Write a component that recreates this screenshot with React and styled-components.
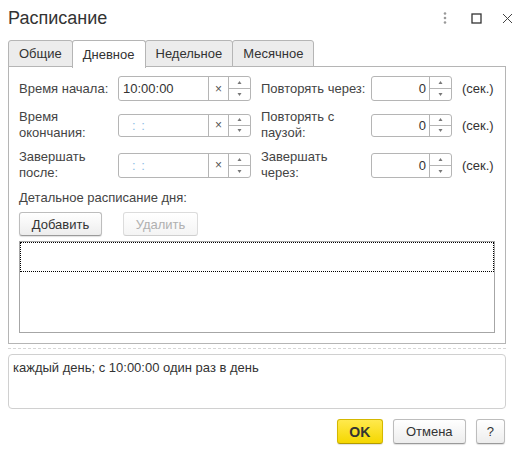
import React from "react";
import styled, { createGlobalStyle } from "styled-components";

const GlobalStyle = createGlobalStyle`
  html, body {
    margin: 0;
    padding: 0;
    background: #fff;
  }
  body {
    font-family: "Liberation Sans", Arial, sans-serif;
    font-size: 13px;
    color: #444;
  }
`;

const Window = styled.div`
  width: 520px;
  height: 456px;
  box-sizing: border-box;
  padding: 0 14px 0 8px;
  display: flex;
  flex-direction: column;
`;

const Header = styled.div`
  height: 36px;
  display: flex;
  align-items: center;
  justify-content: space-between;
  margin-bottom: 4px;
`;

const Title = styled.div`
  font-size: 18px;
  color: #333;
`;

const HeaderTools = styled.div`
  display: flex;
  align-items: center;
  gap: 13px;
  margin-right: -10px;
  color: #444;
`;

const ToolButton = styled.span`
  width: 18px;
  height: 18px;
  display: flex;
  align-items: center;
  justify-content: center;
`;

const Tabs = styled.div`
  display: flex;
  height: 27px;
  position: relative;
  z-index: 1;
`;

const Tab = styled.div`
  box-sizing: border-box;
  height: ${(p) => (p.$active ? "28px" : "27px")};
  padding: 0 10px;
  display: flex;
  align-items: center;
  border: 1px solid #b5b5b5;
  border-bottom: ${(p) => (p.$active ? "none" : "1px solid #b5b5b5")};
  margin-left: -1px;
  border-radius: 3px 3px 0 0;
  background: ${(p) => (p.$active ? "#fff" : "#ececec")};
  color: #333;
  &:first-child {
    margin-left: 0;
  }
`;

const Panel = styled.div`
  box-sizing: border-box;
  border: 1px solid #b5b5b5;
  margin-top: -1px;
  height: 278px;
  padding: 9px 10px 9px 10px;
  display: flex;
  flex-direction: column;
`;

const FieldsGrid = styled.div`
  display: grid;
  grid-template-columns: 99px 133px 120px 81px 1fr;
  grid-template-rows: 25px 32px 32px;
  row-gap: 8px;
  align-items: center;
`;

const Label = styled.div`
  line-height: 16px;
  color: #444;
  padding-left: ${(p) => (p.$right ? "10px" : "0")};
`;

const Unit = styled.div`
  padding-left: 10px;
  color: #333;
`;

const InputBox = styled.div`
  box-sizing: border-box;
  height: ${(p) => p.$h || 24}px;
  border: 1px solid #b5b5b5;
  border-radius: 3px;
  background: #fff;
  display: flex;
  align-items: stretch;
  overflow: hidden;
`;

const InputText = styled.div`
  flex: 1;
  display: flex;
  align-items: center;
  justify-content: ${(p) => (p.$num ? "flex-end" : "flex-start")};
  padding: 0 ${(p) => (p.$num ? "3px" : "4px")} 0 4px;
  color: ${(p) => (p.$empty ? "#8cbde6" : "#333")};
  letter-spacing: ${(p) => (p.$empty ? "1px" : "0")};
  padding-left: ${(p) => (p.$empty ? "13px" : "4px")};
`;

const ClearButton = styled.div`
  width: 19px;
  border-left: 1px solid #b5b5b5;
  display: flex;
  align-items: center;
  justify-content: center;
  color: #555;
  font-size: 12px;
`;

const Spin = styled.div`
  width: 21px;
  border-left: 1px solid #b5b5b5;
  display: flex;
  flex-direction: column;
`;

const SpinHalf = styled.div`
  flex: 1;
  display: flex;
  align-items: center;
  justify-content: center;
  & + & {
    border-top: 1px solid #b5b5b5;
  }
`;

const SectionLabel = styled.div`
  margin-top: 9px;
  line-height: 16px;
  color: #444;
`;

const ButtonRow = styled.div`
  display: flex;
  gap: 21px;
  margin-top: 6px;
`;

const Button = styled.button`
  box-sizing: border-box;
  height: ${(p) => p.$h || 24}px;
  padding: 0 ${(p) => p.$px || 10}px;
  min-width: ${(p) => p.$w || 0}px;
  font-family: "Liberation Sans", Arial, sans-serif;
  font-size: ${(p) => (p.$primary ? "14px" : "13px")};
  font-weight: ${(p) => (p.$primary ? "bold" : "normal")};
  color: ${(p) => (p.disabled ? "#b0b0b0" : "#333")};
  border-radius: 3px;
  border: 1px solid ${(p) => (p.$primary ? "#d4b800" : p.disabled ? "#dcdcdc" : "#bdbdbd")};
  border-bottom-color: ${(p) => (p.$primary ? "#b39b00" : p.disabled ? "#cfcfcf" : "#9a9a9a")};
  background: ${(p) =>
    p.$primary
      ? "linear-gradient(#ffe94d, #f5d700)"
      : p.disabled
      ? "linear-gradient(#fff, #f4f4f4)"
      : "linear-gradient(#fff, #ededed)"};
  box-shadow: ${(p) => (p.disabled ? "none" : "0 1px 1px rgba(0,0,0,0.12)")};
  cursor: default;
`;

const Table = styled.div`
  box-sizing: border-box;
  margin-top: 5px;
  height: 92px;
  border: 1px solid #a6a6a6;
`;

const TableRow = styled.div`
  box-sizing: border-box;
  height: 30px;
  border: 1px dotted #000;
`;

const Separator = styled.div`
  margin-top: 4px;
  border-top: 1px dashed #d6d6d6;
`;

const Summary = styled.div`
  box-sizing: border-box;
  margin-top: 5px;
  height: 55px;
  border: 1px solid #d0d0d0;
  border-radius: 4px;
  padding: 5px 4px;
  color: #333;
  line-height: 16px;
`;

const Footer = styled.div`
  display: flex;
  justify-content: flex-end;
  gap: 10px;
  margin-top: 10px;
  margin-right: 1px;
`;

const Kebab = () => (
  <svg width="4" height="12" viewBox="0 0 4 12">
    <circle cx="2" cy="1.5" r="1.3" fill="#999" />
    <circle cx="2" cy="6" r="1.3" fill="#999" />
    <circle cx="2" cy="10.5" r="1.3" fill="#999" />
  </svg>
);

const Maximize = () => (
  <svg width="11" height="11" viewBox="0 0 11 11">
    <rect x="1" y="1" width="9" height="9" fill="none" stroke="#333" strokeWidth="1.3" />
  </svg>
);

const Close = () => (
  <svg width="11" height="11" viewBox="0 0 11 11">
    <path d="M1 1 L10 10 M10 1 L1 10" stroke="#444" strokeWidth="1" />
  </svg>
);

const Arrow = ({ up }) => (
  <svg width="5" height="3" viewBox="0 0 5 3">
    <path d={up ? "M2.5 0 L4.5 3 L0.5 3 Z" : "M0.5 0 L4.5 0 L2.5 3 Z"} fill="#777" />
  </svg>
);

const SpinControl = () => (
  <Spin>
    <SpinHalf>
      <Arrow up />
    </SpinHalf>
    <SpinHalf>
      <Arrow />
    </SpinHalf>
  </Spin>
);

const TimeInput = ({ value, h }) => (
  <InputBox $h={h}>
    <InputText $empty={!value}>{value || ": :"}</InputText>
    <ClearButton>×</ClearButton>
    <SpinControl />
  </InputBox>
);

const NumberInput = ({ value, h }) => (
  <InputBox $h={h}>
    <InputText $num>{value}</InputText>
    <SpinControl />
  </InputBox>
);

const rows = [
  {
    left: "Время начала:",
    time: "10:00:00",
    right: "Повторять через:",
    h: 25,
  },
  {
    left: (
      <>
        Время
        <br />
        окончания:
      </>
    ),
    time: "",
    right: (
      <>
        Повторять с
        <br />
        паузой:
      </>
    ),
    h: 23,
  },
  {
    left: (
      <>
        Завершать
        <br />
        после:
      </>
    ),
    time: "",
    right: (
      <>
        Завершать
        <br />
        через:
      </>
    ),
    h: 25,
  },
];

export default function App() {
  return (
    <>
      <GlobalStyle />
      <Window>
        <Header>
          <Title>Расписание</Title>
          <HeaderTools>
            <ToolButton>
              <Kebab />
            </ToolButton>
            <ToolButton>
              <Maximize />
            </ToolButton>
            <ToolButton>
              <Close />
            </ToolButton>
          </HeaderTools>
        </Header>

        <Tabs>
          <Tab>Общие</Tab>
          <Tab $active>Дневное</Tab>
          <Tab>Недельное</Tab>
          <Tab>Месячное</Tab>
        </Tabs>

        <Panel>
          <FieldsGrid>
            {rows.map((r, i) => (
              <React.Fragment key={i}>
                <Label>{r.left}</Label>
                <TimeInput value={r.time} h={r.h} />
                <Label $right>{r.right}</Label>
                <NumberInput value="0" h={r.h} />
                <Unit>(сек.)</Unit>
              </React.Fragment>
            ))}
          </FieldsGrid>

          <SectionLabel>Детальное расписание дня:</SectionLabel>
          <ButtonRow>
            <Button $w={83}>Добавить</Button>
            <Button $w={75} disabled>
              Удалить
            </Button>
          </ButtonRow>
          <Table>
            <TableRow />
          </Table>
        </Panel>

        <Separator />
        <Summary>каждый день; с 10:00:00 один раз в день</Summary>

        <Footer>
          <Button $primary $h={25} $w={46}>
            OK
          </Button>
          <Button $h={25} $w={73}>
            Отмена
          </Button>
          <Button $h={25} $w={29} $px={0}>
            ?
          </Button>
        </Footer>
      </Window>
    </>
  );
}
